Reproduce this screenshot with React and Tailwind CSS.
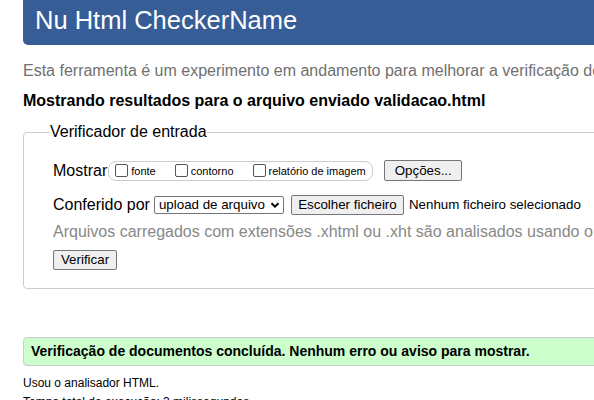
export default function App() {
    return (
        <div className="w-[594px] h-[400px] overflow-hidden bg-white font-['Liberation_Sans',Arial,sans-serif] text-black">
            <div className="w-[800px] pl-[23px]">
                <div className="h-[45px] bg-[#365d95] rounded-b-[5px] pl-[12px] pt-[8px]">
                    <h1 className="text-[25.5px] leading-[25px] text-white">Nu Html CheckerName</h1>
                </div>

                <p className="mt-[17px] text-[16px] leading-[18px] text-[#707070] whitespace-nowrap">
                    Esta ferramenta é um experimento em andamento para melhorar a verificação de HTML, e seu comportamento continua sujeito a mudanças
                </p>
                <p className="mt-[12px] text-[16px] leading-[18px] font-bold whitespace-nowrap">
                    Mostrando resultados para o arquivo enviado validacao.html
                </p>

                <fieldset className="mt-[13px] border border-[#cccccc] rounded-[4px] px-0 pb-[17px]">
                    <legend className="ml-[26px] text-[16px] leading-[18px]">Verificador de entrada</legend>
                    <div className="pl-[29px] pt-[19px]">
                        <div className="flex items-center h-[21px] whitespace-nowrap">
                            <span className="text-[16px] leading-[18px]">Mostrar</span>
                            <div className="ml-[1px] flex items-center h-[20px] w-[265px] border border-[#cccccc] rounded-[8px] pl-[6px] text-[11px]">
                                <input type="checkbox" className="w-[13px] h-[13px] m-0 appearance-none border border-[#555] rounded-[2px] bg-white" />
                                <span className="ml-[3px] mt-[2px]">fonte</span>
                                <input type="checkbox" className="ml-[19px] w-[13px] h-[13px] m-0 appearance-none border border-[#555] rounded-[2px] bg-white" />
                                <span className="ml-[3px] mt-[2px]">contorno</span>
                                <input type="checkbox" className="ml-[19px] w-[13px] h-[13px] m-0 appearance-none border border-[#555] rounded-[2px] bg-white" />
                                <span className="ml-[3px] mt-[2px]">relatório de imagem</span>
                            </div>
                            <button className="ml-[11px] h-[21px] w-[78px] border border-[#767676] rounded-[2px] bg-[#efefef] text-[13.33px] leading-none">
                                Opções...
                            </button>
                        </div>

                        <div className="mt-[13px] flex items-center h-[21px] whitespace-nowrap">
                            <span className="text-[16px] leading-[18px]">Conferido por</span>
                            <div className="ml-[4px] flex items-center justify-between h-[18px] w-[130px] border border-[#767676] rounded-[2px] pl-[4px] pr-[3px] text-[13.33px] leading-none">
                                <span>upload de arquivo</span>
                                <svg width="10" height="10" viewBox="0 0 10 10" fill="none" stroke="#000" strokeWidth="2">
                                    <path d="M1.5 3.2 L5 6.7 L8.5 3.2" />
                                </svg>
                            </div>
                            <button className="ml-[7px] h-[20px] w-[113px] border border-[#767676] rounded-[2px] bg-[#efefef] text-[13.33px] leading-none">
                                Escolher ficheiro
                            </button>
                            <span className="ml-[5px] text-[13.33px]">Nenhum ficheiro selecionado</span>
                        </div>

                        <p className="mt-[8px] text-[16px] leading-[18px] text-[#888888] whitespace-nowrap">
                            Arquivos carregados com extensões .xhtml ou .xht são analisados usando o analisador XML.
                        </p>

                        <button className="mt-[9px] h-[20px] w-[64px] border border-[#767676] rounded-[2px] bg-[#efefef] text-[13.33px] leading-none">
                            Verificar
                        </button>
                    </div>
                </fieldset>

                <div className="mt-[48px] h-[29px] bg-[#ccffcc] border border-[#cccccc] rounded-[4px] pl-[7px] flex items-center">
                    <p className="text-[14px] font-bold whitespace-nowrap">
                        Verificação de documentos concluída. Nenhum erro ou aviso para mostrar.
                    </p>
                </div>

                <p className="mt-[10px] text-[12px] leading-[14px]">Usou o analisador HTML.</p>
                <p className="mt-[5px] text-[12px] leading-[14px]">Tempo total de execução: 3 milissegundos.</p>
            </div>
        </div>
    );
}
